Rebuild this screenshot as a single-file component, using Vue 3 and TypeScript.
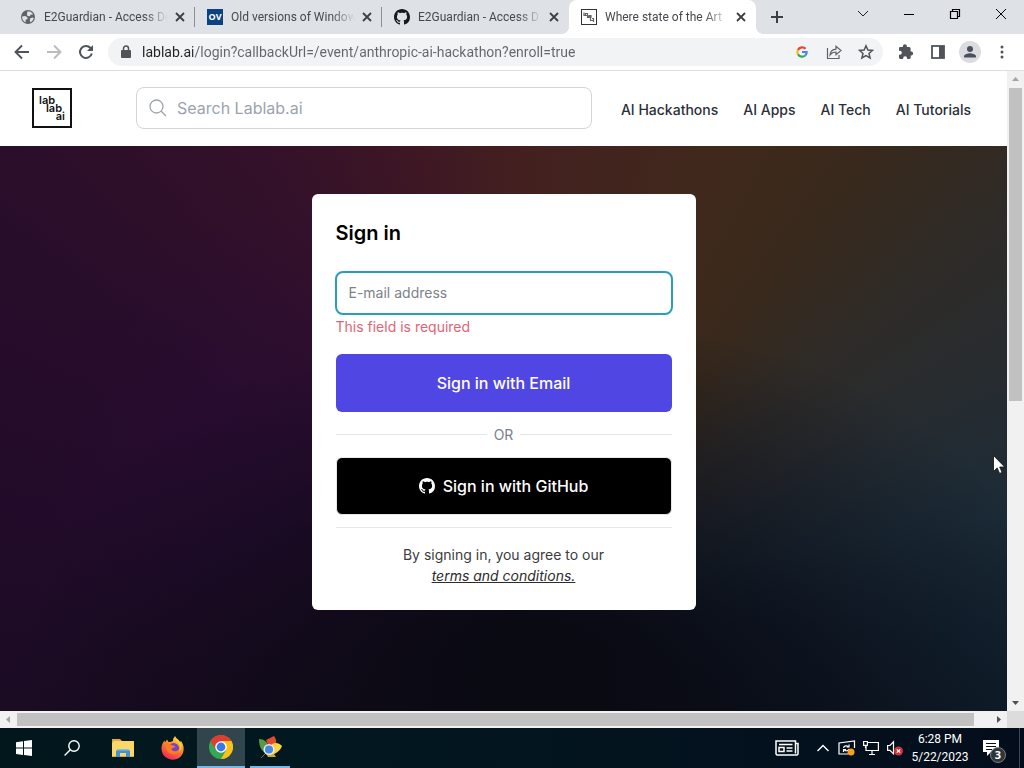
<script setup lang="ts">
import { ref } from 'vue'

interface Tab {
  id: number
  title: string
  icon: 'globe' | 'ov' | 'github' | 'lablab'
  active?: boolean
}

const tabs: Tab[] = [
  { id: 1, title: 'E2Guardian - Access De', icon: 'globe' },
  { id: 2, title: 'Old versions of Window', icon: 'ov' },
  { id: 3, title: 'E2Guardian - Access D', icon: 'github' },
  { id: 4, title: 'Where state of the Art', icon: 'lablab', active: true },
]

const navLinks = ['AI Hackathons', 'AI Apps', 'AI Tech', 'AI Tutorials']

const address = ref('lablab.ai/login?callbackUrl=/event/anthropic-ai-hackathon?enroll=true')
const query = ref('')
const email = ref('')

const githubMark =
  'M8 0C3.58 0 0 3.58 0 8c0 3.54 2.29 6.53 5.47 7.59.4.07.55-.17.55-.38 0-.19-.01-.82-.01-1.49-2.01.37-2.53-.49-2.69-.94-.09-.23-.48-.94-.82-1.13-.28-.15-.68-.52-.01-.53.63-.01 1.08.58 1.23.82.72 1.21 1.87.87 2.33.66.07-.52.28-.87.51-1.07-1.78-.2-3.64-.89-3.64-3.95 0-.87.31-1.59.82-2.15-.08-.2-.36-1.02.08-2.12 0 0 .67-.21 2.2.82.64-.18 1.32-.27 2-.27s1.36.09 2 .27c1.53-1.04 2.2-.82 2.2-.82.44 1.1.16 1.92.08 2.12.51.56.82 1.27.82 2.15 0 3.07-1.87 3.75-3.65 3.95.29.25.54.73.54 1.48 0 1.07-.01 1.93-.01 2.2 0 .21.15.46.55.38A8.01 8.01 0 0 0 16 8c0-4.42-3.58-8-8-8z'
</script>

<template>
  <div class="desktop">
    <header class="tabstrip">
      <div class="tabs">
        <div v-for="tab in tabs" :key="tab.id" class="tab" :class="{ active: tab.active }">
          <button class="tab-main" type="button">
            <svg v-if="tab.icon === 'globe'" class="favicon" viewBox="0 0 16 16">
              <circle cx="8" cy="8" r="7" fill="#5f6368" />
              <path d="M2 7.500l3.500-.5 2 1.500v1.500l-1.800.8-.2 2.700C3.500 12.600 2 10.500 2 7.500zM7.500 2.200l3.200.5 2.600 2.600-2.600.4-1 1.600-2.200-.4-.6-1.700zM10 9.500l2.300-.9 1.500.5c-.4 1.900-1.600 3.500-3.400 4.300l-.6-1.800z" fill="#dee1e6" />
            </svg>
            <span v-else-if="tab.icon === 'ov'" class="favicon ov">OV</span>
            <svg v-else-if="tab.icon === 'github'" class="favicon" viewBox="0 0 16 16">
              <path :d="githubMark" fill="#16191d" />
            </svg>
            <svg v-else class="favicon" viewBox="0 0 16 16" fill="none" stroke="#333">
              <rect x=".5" y=".5" width="15" height="15" fill="#fff" />
              <g stroke="#666"><path d="M3 3.500v3h3.500v-2h-2v2M6.500 4.500v4H10v-2H8v2M9.500 8.500v3h3v-2H11M12.500 11v2M7 7.500h3" stroke-width="1.200" /></g>
            </svg>
            <span class="tab-title">{{ tab.title }}</span>
          </button>
          <button class="tab-close" type="button" aria-label="Close tab">
            <svg width="10" height="10" viewBox="0 0 10 10" stroke="#3c4043" stroke-width="1.8"><path d="M1 1l8 8M9 1L1 9" /></svg>
          </button>
        </div>
      </div>
      <button class="new-tab" type="button" aria-label="New tab">
        <svg width="14" height="14" viewBox="0 0 14 14" stroke="#3c4043" stroke-width="2"><path d="M7 1v12M1 7h12" /></svg>
      </button>
      <div class="window-controls">
        <button type="button" aria-label="Search tabs">
          <svg width="12" height="12" viewBox="0 0 12 12" fill="none" stroke="#222"><path d="M1 3l5 5 5-5" /></svg>
        </button>
        <button type="button" aria-label="Minimize">
          <svg width="12" height="12" viewBox="0 0 12 12" fill="none" stroke="#000"><path d="M1 6.500h10" /></svg>
        </button>
        <button type="button" aria-label="Restore">
          <svg width="12" height="12" viewBox="0 0 12 12" fill="none" stroke="#000" stroke-width="1.200"><path d="M1.500 3.500h7v7h-7zM3.500 3.500v-2h7v7h-2" /></svg>
        </button>
        <button type="button" aria-label="Close window">
          <svg width="12" height="12" viewBox="0 0 12 12" fill="none" stroke="#000"><path d="M1 1l10 10M11 1L1 11" /></svg>
        </button>
      </div>
    </header>

    <div class="toolbar">
      <button type="button" aria-label="Back">
        <svg width="16" height="16" viewBox="0 0 16 16" fill="none" stroke="#50545a" stroke-width="1.900"><path d="M15 8H2M8 1.500L1.500 8 8 14.500" /></svg>
      </button>
      <button type="button" aria-label="Forward">
        <svg width="16" height="16" viewBox="0 0 16 16" fill="none" stroke="#babcbe" stroke-width="1.900"><path d="M1 8h13M8 1.500L14.500 8 8 14.500" /></svg>
      </button>
      <button type="button" aria-label="Reload">
        <svg width="16" height="16" viewBox="0 0 16 16" fill="none" stroke="#50545a" stroke-width="2"><path d="M13.800 9.500A6 6 0 1 1 12.500 4L14 5.500" /><path d="M15 1v6H9z" fill="#50545a" stroke="none" /></svg>
      </button>
      <div class="omnibox">
        <svg class="lock" width="10" height="14" viewBox="0 0 10 14"><rect y="5" width="10" height="8" rx="1" fill="#505357" /><path d="M2.500 6V3.500a2.500 2.500 0 0 1 5 0V6" fill="none" stroke="#505357" stroke-width="1.500" /></svg>
        <input v-model="address" class="address" type="text" aria-label="Address" spellcheck="false" />
        <button type="button" aria-label="Google">
          <svg width="12" height="12" viewBox="0 0 14 14" fill="none" stroke-width="2.600">
            <path d="M11.200 3.200A5.600 5.600 0 0 0 2.200 4.600" stroke="#ea4335" />
            <path d="M2.200 4.600a5.600 5.600 0 0 0 .1 5" stroke="#fbbc05" />
            <path d="M2.300 9.600a5.600 5.600 0 0 0 8.500 1.500" stroke="#34a853" />
            <path d="M10.800 11.100A5 5 0 0 0 12.400 7H7" stroke="#4285f4" />
          </svg>
        </button>
        <button type="button" aria-label="Share">
          <svg width="16" height="16" viewBox="0 0 16 16" fill="none" stroke="#5f6368" stroke-width="1.200"><path d="M1.500 4v10.500h11.500v-3.500" /><path d="M4 11C4.500 7 7 5.400 10 5.200V2.200l5 4.300-5 4.200V8C7.500 8 5.500 9 4 11z" /></svg>
        </button>
        <button type="button" aria-label="Bookmark">
          <svg width="16" height="16" viewBox="0 0 16 16" fill="none" stroke="#505357" stroke-width="1.500"><path d="M8 1.800l1.900 4.200 4.600.4-3.500 3 1.100 4.500L8 11.500l-4.100 2.400L5 9.400l-3.500-3L6.100 6z" /></svg>
        </button>
      </div>
      <div class="extras">
        <button type="button" aria-label="Extensions">
          <svg width="16" height="16" viewBox="0 0 16 16" fill="#50545a"><path d="M13.600 7.500h-1V4.500A1.500 1.500 0 0 0 11.100 3H8.900V2.200a2 2 0 0 0-4 0V3H2.300A1.300 1.300 0 0 0 1 4.300v2.500h.8a2 2 0 0 1 0 4H1v2.800A1.400 1.400 0 0 0 2.300 15h2.800v-.8a2 2 0 0 1 4 0v.8h2.200a1.400 1.400 0 0 0 1.400-1.400v-2.200h.9a2 2 0 0 0 0-3.900z" /></svg>
        </button>
        <button type="button" aria-label="Side panel">
          <svg width="14" height="14" viewBox="0 0 14 14"><rect x="1" y="1" width="12" height="12" fill="none" stroke="#50545a" stroke-width="1.800" /><path d="M8 1h5v12H8z" fill="#50545a" /></svg>
        </button>
        <button type="button" aria-label="Profile">
          <svg width="22" height="22" viewBox="0 0 22 22"><circle cx="11" cy="11" r="11" fill="#dadce0" /><circle cx="11" cy="8" r="3" fill="#4a5060" /><path d="M5 16.500v-1.200c0-2 4-3 6-3s6 1 6 3v1.200z" fill="#4a5060" /></svg>
        </button>
        <button type="button" aria-label="Menu">
          <svg width="4" height="14" viewBox="0 0 4 14" fill="#50545a"><circle cx="2" cy="2" r="1.500" /><circle cx="2" cy="7" r="1.500" /><circle cx="2" cy="12" r="1.500" /></svg>
        </button>
      </div>
    </div>

    <div class="viewport">
      <div class="page">
        <header class="site-header">
          <a class="logo" href="#" aria-label="lablab.ai"><span>lab</span><span>lab</span><span>ai</span></a>
          <label class="search">
            <svg width="18" height="18" viewBox="0 0 18 18" fill="none" stroke="#9ca3af" stroke-width="1.300"><circle cx="7.500" cy="7.500" r="6.500" /><path d="M12.200 12.200L17 17" /></svg>
            <input v-model="query" type="search" placeholder="Search Lablab.ai" aria-label="Search Lablab.ai" />
          </label>
          <nav>
            <a v-for="link in navLinks" :key="link" href="#">{{ link }}</a>
          </nav>
        </header>

        <main class="hero">
          <form class="card" novalidate @submit.prevent>
            <h1>Sign in</h1>
            <input v-model="email" class="email" type="email" placeholder="E-mail address" aria-label="E-mail address" aria-describedby="email-error" />
            <p id="email-error" class="error">This field is required</p>
            <button class="primary" type="submit">Sign in with Email</button>
            <div class="divider">OR</div>
            <button class="github" type="button">
              <svg width="16" height="16" viewBox="0 0 16 16" fill="#fff"><path :d="githubMark" /></svg>
              Sign in with GitHub
            </button>
            <p class="terms">By signing in, you agree to our<br /><a href="#">terms and conditions.</a></p>
          </form>
        </main>
      </div>

      <div class="vbar">
        <svg width="17" height="17" viewBox="0 0 17 17"><path d="M5 10h7L8.500 6z" fill="#a3a3a3" /></svg>
        <div class="vtrack"><div class="vthumb"></div></div>
        <svg width="17" height="17" viewBox="0 0 17 17"><path d="M5 7h7l-3.500 4z" fill="#505050" /></svg>
      </div>
      <div class="hbar">
        <svg width="17" height="17" viewBox="0 0 17 17"><path d="M10 5v7L6 8.500z" fill="#a3a3a3" /></svg>
        <div class="htrack"><div class="hthumb"></div></div>
        <svg width="17" height="17" viewBox="0 0 17 17"><path d="M7 5v7l4-3.500z" fill="#505050" /></svg>
      </div>
      <div class="corner"></div>
    </div>

    <footer class="taskbar">
      <div class="apps">
        <button type="button" aria-label="Start">
          <svg width="16" height="16" viewBox="0 0 16 16" fill="#fff"><path d="M0 2.200l7-1v6.400H0zM8 1l8-1v7.600H8zM0 8.500h7v6.400l-7-1zM8 8.500h8V16l-8-1.100z" /></svg>
        </button>
        <button type="button" aria-label="Search">
          <svg width="16" height="16" viewBox="0 0 16 16" fill="none" stroke="#fff" stroke-width="1.400"><circle cx="10" cy="6" r="5.200" /><path d="M6.300 9.700L.6 15.400" /></svg>
        </button>
        <button class="wide" type="button" aria-label="File Explorer">
          <svg width="22" height="18" viewBox="0 0 22 18"><path d="M0 0h8l2 2h12v16H0z" fill="#e9a92f" /><path d="M2 2h20v15H0V4z" fill="#fcd667" /><path d="M4 18v-6l2-2h10l2 2v6h-4v-4H8v4z" fill="#3f94cf" /><path d="M5 10h12v1.500H5z" fill="#7cc0e8" /></svg>
        </button>
        <button type="button" aria-label="Firefox">
          <svg width="24" height="24" viewBox="0 0 24 24">
            <defs><linearGradient id="flame" x1=".8" y1="0" x2=".3" y2="1"><stop offset="0" stop-color="#ffe64a" /><stop offset=".45" stop-color="#ff8a23" /><stop offset="1" stop-color="#ee2459" /></linearGradient></defs>
            <path d="M14 0c1 2.500 4 3.500 5 6l1-1c3 4 3.500 9 1.500 13-2 3.800-5.500 5.700-9.500 5.700C5.500 23.700.5 19 .5 12.500c0-3 1-6 3-8l.5 2 2-3 1.500 2.500c2 0 3.500-.5 4.500-1C11.700 3 13 1.500 14 0z" fill="url(#flame)" />
            <circle cx="12.500" cy="12.500" r="5.500" fill="#7542c9" />
            <path d="M4.500 8c3-.7 5 .2 7 1.500L14.500 10c-1 2-3.500 1.800-4 2.600-.3 1.500 1.500 3 4 2.600 2-.3 2.500-1.500 4-1.200-1 3.500-5 5-8 4-4-1.500-6-5-6-10z" fill="#ff7b23" />
            <path d="M14 2c1 3 5 4 5 9 0 2-.5 3.500-1.500 5 3-2 3.500-5 2.500-8-1-2.500-4-4-6-6z" fill="#ffd43c" />
          </svg>
        </button>
        <button class="current" type="button" aria-label="Google Chrome">
          <svg width="24" height="24" viewBox="0 0 24 24">
            <circle cx="12" cy="12" r="12" fill="#34a853" />
            <path d="M1.600 6A12 12 0 0 1 22.400 6H12L6.800 15z" fill="#e33b2e" />
            <path d="M22.400 6A12 12 0 0 1 12 24l5.200-9L12 6z" fill="#fbc116" />
            <circle cx="12" cy="12" r="5.800" fill="#fff" /><circle cx="12" cy="12" r="4.400" fill="#3b78e7" />
          </svg>
        </button>
        <button class="open" type="button" aria-label="Browser">
          <svg width="24" height="24" viewBox="0 0 24 24">
            <path d="M1 4c5 0 9 3 10 9l-5 4C2 14 1 9 1 4z" fill="#579947" />
            <path d="M8 5l8-4c3 4 3 8 0 12l-5-1z" fill="#e24a31" />
            <path d="M14 9c4-2 7-1 10 2-2 5-6 8-12 9z" fill="#fbd344" />
            <path d="M8 18l8 1 2 3H10z" fill="#d5a82f" />
            <path d="M9 17l-6 6" stroke="#806846" />
            <circle cx="11" cy="14.500" r="5.500" fill="#e7e9ee" /><circle cx="11" cy="14.500" r="4" fill="#4488df" />
          </svg>
        </button>
      </div>
      <div class="tray">
        <button class="news" type="button" aria-label="News">
          <svg width="24" height="16" viewBox="0 0 24 16" fill="none" stroke="#fff" stroke-width="1.500"><path d="M20.500 3.500H23V14l-1 1H2l-1-1V1h19.500v12.500M4 4.500h13.500M11.500 8h6M11.500 11h6" /><rect x="4" y="7.500" width="5" height="4" /></svg>
        </button>
        <button type="button" aria-label="Show hidden icons">
          <svg width="12" height="8" viewBox="0 0 12 8" fill="none" stroke="#fff" stroke-width="1.400"><path d="M.5 7L6 1.500 11.500 7" /></svg>
        </button>
        <button type="button" aria-label="Updates">
          <svg width="18" height="16" viewBox="0 0 18 16" fill="none" stroke="#fff" stroke-width="1.200"><path d="M16.500 8V1L1 3v11h9" /><path d="M5.500 8c.5-2.500 3.500-3 5-1M11 4.500V7H8.500M11 9c-1 2-3.500 2.500-5 .5M5.500 12V9.500H8" /><circle cx="13" cy="12" r="3.500" fill="#f9a11b" stroke="none" /></svg>
        </button>
        <button type="button" aria-label="Network">
          <svg width="16" height="16" viewBox="0 0 16 16" fill="none" stroke="#fff" stroke-width="1.200"><path d="M5 2.500h10.400v8H3V6M9 11v3M6 14.500h6" /><path d="M.6 1.500h3.800v3.800H.6zM2.500 5.500V8" /></svg>
        </button>
        <button type="button" aria-label="Volume muted">
          <svg width="16" height="16" viewBox="0 0 16 16" fill="none" stroke="#fff" stroke-width="1.200"><path d="M.6 5.500H3l3.500-3.700v12L3 10.300H.6z" /><circle cx="11.500" cy="11" r="4.500" fill="#cf3438" stroke="none" /><path d="M9.800 9.300l3.400 3.400M13.200 9.300l-3.400 3.400" /></svg>
        </button>
        <button class="clock" type="button"><span>6:28 PM</span><span>5/22/2023</span></button>
        <button class="notices" type="button" aria-label="3 notifications">
          <svg width="16" height="16" viewBox="0 0 16 16"><path d="M0 0h16v12H8l-4 4v-4H0z" fill="#fff" /><path d="M3 3.500h10M3 6.500h10M3 9.500h6" stroke="#04101d" /></svg>
          <span class="count">3</span>
        </button>
      </div>
    </footer>

    <svg class="cursor" width="12" height="19" viewBox="0 0 12 19"><path d="M.5.500v16l3.700-3.600 2.400 5.500 2.500-1-2.400-5.400h5z" fill="#fff" stroke="#111" stroke-width=".8" /></svg>
  </div>
</template>

<style>
html,
body {
  margin: 0;
  background: #fff;
}
</style>

<style scoped>
.desktop {
  position: relative;
  display: flex;
  flex-direction: column;
  height: 100vh;
  overflow: hidden;
  font-family: 'Open Sans', 'Noto Sans', sans-serif;
}

* {
  box-sizing: border-box;
}

button {
  display: flex;
  align-items: center;
  justify-content: center;
  margin: 0;
  padding: 0;
  border: 0;
  background: none;
  font: inherit;
  color: inherit;
}

input {
  min-width: 0;
  padding: 0;
  border: 0;
  outline: 0;
  background: none;
  font: inherit;
}

svg {
  flex: none;
  display: block;
}

/* Tab strip */
.tabstrip {
  display: flex;
  height: 34px;
  padding-left: 8px;
  background: #dee1e6;
}

.tabs {
  display: flex;
  flex: 0 1 748px;
  min-width: 0;
}

.tab {
  position: relative;
  display: flex;
  flex: 1;
  min-width: 0;
  align-items: center;
  padding: 0 7px 0 12px;
}

.tab:nth-child(-n + 2)::after {
  content: '';
  width: 1px;
  height: 20px;
  position: absolute;
  right: 0;
  background: #8b8e93;
}

.tab.active {
  background: #fff;
  border-radius: 8px 8px 0 0;
}

.tab.active::before,
.tab.active::after {
  content: '';
  position: absolute;
  bottom: 0;
  width: 8px;
  height: 8px;
}

.tab.active::before {
  right: 100%;
  background: radial-gradient(circle at 0 0, transparent 8px, #fff 8px);
}

.tab.active::after {
  left: 100%;
  background: radial-gradient(circle at 100% 0, transparent 8px, #fff 8px);
}

.tab-main {
  flex: 1;
  min-width: 0;
  gap: 8px;
}

.favicon {
  flex: none;
  width: 16px;
  height: 16px;
}

.ov {
  background: #0b4282;
  color: #fff;
  font: 700 9px/16px 'Open Sans', sans-serif;
}

.tab-title {
  flex: 1;
  overflow: hidden;
  white-space: nowrap;
  text-align: left;
  font: 12px/20px Roboto, 'Open Sans', sans-serif;
  color: #45494d;
  mask-image: linear-gradient(to right, #000 calc(100% - 24px), transparent);
}

.tab-close {
  width: 16px;
  height: 16px;
  margin-left: 4px;
}

.new-tab {
  width: 28px;
  margin-left: 7px;
}

.window-controls {
  display: flex;
  margin-left: auto;
  height: 28px;
}

.window-controls button {
  width: 46px;
}

/* Toolbar */
.toolbar {
  display: flex;
  align-items: center;
  height: 37px;
  padding: 0 6px;
  background: #fff;
  border-bottom: 1px solid #dcdee1;
}

.toolbar > button {
  width: 32px;
  height: 32px;
}

.omnibox {
  display: flex;
  flex: 1;
  min-width: 0;
  align-items: center;
  height: 28px;
  margin-left: 6px;
  padding: 0 1px 0 13px;
  border-radius: 14px;
  background: #f1f3f4;
}

.address {
  flex: 1;
  margin-left: 11px;
  font: 14px/20px Roboto, 'Open Sans', sans-serif;
  color: transparent;
  background: linear-gradient(to right, #202124 51px, #62666a 51px);
  background-clip: text;
}

.omnibox button {
  width: 32px;
}

.extras {
  display: flex;
  align-items: center;
  margin-left: 7px;
}

.extras button {
  width: 32px;
}

/* Page area with its two scrollbars */
.viewport {
  flex: 1;
  min-height: 0;
  display: grid;
  grid-template: minmax(0, 1fr) 17px / minmax(0, 1fr) 17px;
}

.page {
  display: flex;
  flex-direction: column;
  overflow: hidden;
  font-family: Inter, 'Liberation Sans', sans-serif;
}

.site-header {
  display: flex;
  align-items: center;
  height: 75px;
  padding: 0 36px 2px 32px;
  background: #fff;
}

.logo {
  display: flex;
  flex-direction: column;
  width: 40px;
  height: 40px;
  padding: 6px 5px;
  border: 2px solid #111;
  font-size: 11px;
  font-weight: 600;
  line-height: 8px;
  color: #111;
  text-decoration: none;
}

.logo span:nth-child(2) {
  text-align: center;
  padding-left: 4px;
}

.logo span:nth-child(3) {
  text-align: right;
}

.search {
  display: flex;
  flex: 1;
  align-items: center;
  gap: 10px;
  height: 42px;
  margin-left: 64px;
  padding: 0 12px;
  border: 1px solid #d1d5db;
  border-radius: 8px;
}

.search input {
  flex: 1;
  font-size: 16px;
}

.search input::placeholder {
  color: #9ca3af;
}

nav {
  display: flex;
  gap: 25px;
  margin-left: 29px;
  padding-top: 4px;
}

nav a {
  font-size: 14px;
  font-weight: 500;
  line-height: 20px;
  color: #2b3038;
  text-decoration: none;
  white-space: nowrap;
}

.hero {
  flex: 1;
  padding: 48px 24px;
  background:
    radial-gradient(ellipse 52% 62% at 54% 92%, #0a0a13 10%, #0a0a1300),
    radial-gradient(ellipse 24% 45% at 28% 55%, #2a0a3a80, #2a0a3a00),
    conic-gradient(
      from 0deg at 52% 80%,
      #43201f 0deg,
      #40291c 24deg,
      #38291c 38deg,
      #2e2b28 52deg,
      #262c31 66deg,
      #1b2b37 80deg,
      #11202e 96deg,
      #0a1622 115deg,
      #0b0e17 145deg,
      #0b0b14 180deg,
      #140b1c 225deg,
      #1a0b22 255deg,
      #220b2a 280deg,
      #280d2a 305deg,
      #34112a 330deg,
      #3e1724 346deg,
      #43201f 360deg
    );
}

.card {
  display: flex;
  flex-direction: column;
  max-width: 384px;
  margin: 0 auto;
  padding: 24px;
  border-radius: 6px;
  background: #fff;
}

h1 {
  margin: 0;
  font-size: 20px;
  font-weight: 600;
  line-height: 30px;
  color: #000;
}

.email {
  height: 44px;
  margin: 23px -1px 0;
  padding: 0 12px 2px;
  border: 2px solid #2a9dbb;
  border-radius: 8px;
  font-size: 14px;
}

.email::placeholder {
  color: #7c828a;
}

.error {
  margin: 1px 0 17px;
  font-size: 14px;
  line-height: 21px;
  color: #e26474;
}

.primary,
.github {
  height: 58px;
  border-radius: 6px;
  font-size: 16px;
  font-weight: 500;
  color: #fff;
}

.primary {
  background: #5046e4;
}

.github {
  gap: 8px;
  border: 1px solid #e5e7eb;
  background: #000;
}

.divider {
  display: flex;
  align-items: center;
  gap: 7px;
  margin: 12px 0;
  font-size: 14px;
  line-height: 21px;
  color: #7b818b;
}

.divider::before,
.divider::after {
  content: '';
  flex: 1;
  height: 1px;
  background: #e5e7eb;
}

.terms {
  margin: 12px 0 0;
  padding-top: 16px;
  border-top: 1px solid #e5e7eb;
  text-align: center;
  font-size: 14px;
  line-height: 21px;
  color: #3c3c3c;
}

.terms a {
  color: #2c2c2c;
  font-style: italic;
}

.vbar,
.hbar {
  display: flex;
  background: #f1f1f1;
}

.vbar {
  flex-direction: column;
}

.vtrack,
.htrack {
  flex: 1;
  min-width: 0;
  min-height: 0;
}

.vthumb {
  height: calc(100% * 16 / 31);
  margin: 0 2px;
  background: #c1c1c1;
}

.hthumb {
  height: 13px;
  margin: 2px 16px 2px 0;
  background: #c1c1c1;
}

.corner {
  background: #dcdcdc;
}

/* Taskbar */
.taskbar {
  display: flex;
  justify-content: space-between;
  height: 40px;
  background: linear-gradient(to right, #02171c, #021820 30%, #03121e 70%, #040d1c);
  color: #fff;
}

.apps,
.tray {
  display: flex;
}

.apps button {
  width: 48px;
}

.apps .wide {
  width: 53px;
}

.apps .current {
  background: #30464c;
  border-bottom: 2px solid #79b6e6;
}

.apps .open {
  width: 40px;
  margin-left: 5px;
  border-bottom: 2px solid #79b6e6;
}

.tray {
  padding-right: 10px;
  border-right: 1px solid #3a4454;
  margin-right: 4px;
}

.tray button {
  width: 24px;
}

.tray .news {
  width: 48px;
}

.tray .clock {
  flex-direction: column;
  width: 66px;
  font: 12px/18px Roboto, 'Open Sans', sans-serif;
}

.tray .notices {
  position: relative;
  width: 36px;
}

.count {
  position: absolute;
  left: 17px;
  top: 19px;
  width: 16px;
  height: 16px;
  border: 1px solid #7b7f86;
  border-radius: 50%;
  background: #30343b;
  font: 700 11px/14px 'Open Sans', sans-serif;
  text-align: center;
}

.cursor {
  position: absolute;
  right: 19px;
  top: 455px;
}
</style>
